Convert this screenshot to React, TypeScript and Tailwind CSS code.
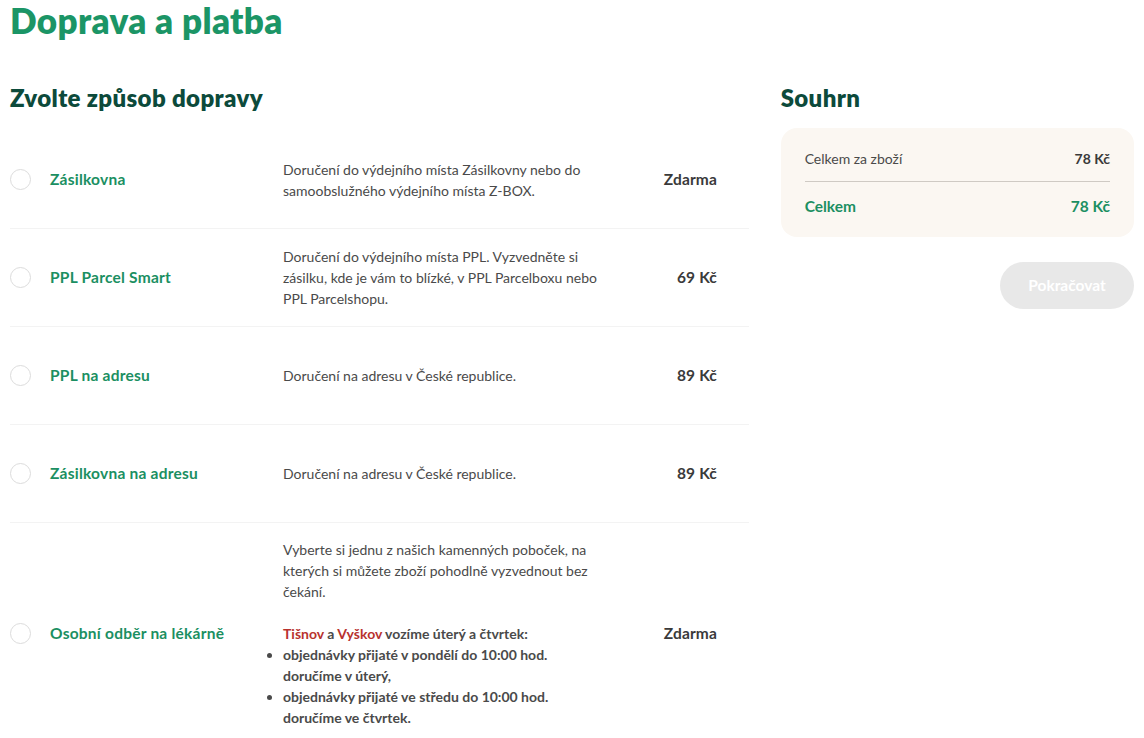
import React, { useState } from "react";

type Method = {
  id: string;
  name: string;
  desc: React.ReactNode;
  price: string;
};

const methods: Method[] = [
  {
    id: "zasilkovna",
    name: "Zásilkovna",
    desc: "Doručení do výdejního místa Zásilkovny nebo do samoobslužného výdejního místa Z-BOX.",
    price: "Zdarma",
  },
  {
    id: "ppl-smart",
    name: "PPL Parcel Smart",
    desc: "Doručení do výdejního místa PPL. Vyzvedněte si zásilku, kde je vám to blízké, v PPL Parcelboxu nebo PPL Parcelshopu.",
    price: "69 Kč",
  },
  {
    id: "ppl-adresa",
    name: "PPL na adresu",
    desc: "Doručení na adresu v České republice.",
    price: "89 Kč",
  },
  {
    id: "zasilkovna-adresa",
    name: "Zásilkovna na adresu",
    desc: "Doručení na adresu v České republice.",
    price: "89 Kč",
  },
  {
    id: "osobni",
    name: "Osobní odběr na lékárně",
    desc: (
      <>
        <p>
          Vyberte si jednu z našich kamenných poboček, na kterých si můžete zboží pohodlně vyzvednout bez
          čekání.
        </p>
        <p className="mt-[21px] font-bold">
          <span className="text-[#b8322e]">Tišnov</span> a <span className="text-[#b8322e]">Vyškov</span>{" "}
          vozíme úterý a čtvrtek:
        </p>
        <ul className="list-disc list-outside font-bold">
          <li>objednávky přijaté v pondělí do 10:00 hod. doručíme v úterý,</li>
          <li>objednávky přijaté ve středu do 10:00 hod. doručíme ve čtvrtek.</li>
        </ul>
      </>
    ),
    price: "Zdarma",
  },
];

const App: React.FC = () => {
  const [selected, setSelected] = useState<string | null>(null);

  return (
    <div className="min-h-screen bg-white px-[10px] font-['Lato','Liberation_Sans',sans-serif] text-[#444]">
      <h1 className="text-[35px] leading-[40px] font-extrabold tracking-[0.01em] text-[#1b9566]">
        Doprava a platba
      </h1>

      <div className="mt-[42px] flex gap-[32px]">
        {/* left column */}
        <div className="w-[740px]">
          <h2 className="text-[24px] leading-[32px] font-extrabold tracking-[0.015em] text-[#0c4a3b]">
            Zvolte způsob dopravy
          </h2>

          <div className="mt-[17px]">
            {methods.map((m, i) => (
              <label
                key={m.id}
                className={`flex min-h-[98px] cursor-pointer items-center py-4 ${
                  i < methods.length - 1 ? "border-b border-[#f3f3f3]" : ""
                }`}
              >
                <input
                  type="radio"
                  name="doprava"
                  className="sr-only"
                  checked={selected === m.id}
                  onChange={() => setSelected(m.id)}
                />
                <span
                  className={`h-[21px] w-[21px] shrink-0 rounded-full border ${
                    selected === m.id ? "border-[6px] border-[#1b9566]" : "border-[#dcdcdc]"
                  }`}
                />
                <span className="ml-[19px] w-[233px] shrink-0 text-[15.5px] font-bold tracking-[0.015em] text-[#1b8f62]">
                  {m.name}
                </span>
                <div className="w-[325px] shrink-0 text-[14px] leading-[21px] text-[#4a4a4a]">{m.desc}</div>
                <span className="w-[109px] shrink-0 text-right text-[15.5px] font-bold tracking-[0.01em] text-[#3a3a3a]">
                  {m.price}
                </span>
              </label>
            ))}
          </div>
        </div>

        {/* right column */}
        <div className="w-[354px]">
          <h2 className="text-[24px] leading-[32px] font-extrabold tracking-[0.015em] text-[#0c4a3b]">Souhrn</h2>

          <div className="mt-[14px] rounded-2xl bg-[#fbf7f2] px-[24px] pt-[20px] pb-[19px]">
            <div className="flex items-center justify-between border-b border-[#cfcac4] pb-[12px] text-[14px] leading-[21px]">
              <span className="text-[#4a4a4a]">Celkem za zboží</span>
              <span className="font-bold text-[#3a3a3a]">78 Kč</span>
            </div>
            <div className="flex items-center justify-between pt-[12px] text-[15.5px] leading-[24px] font-bold text-[#1b8f62]">
              <span>Celkem</span>
              <span>78 Kč</span>
            </div>
          </div>

          <div className="mt-[25px] flex justify-end">
            <button
              disabled
              className="h-[47px] w-[134px] rounded-full bg-[#e8e8e8] text-[15.5px] font-bold text-white"
            >
              Pokračovat
            </button>
          </div>
        </div>
      </div>
    </div>
  );
};

export default App;
